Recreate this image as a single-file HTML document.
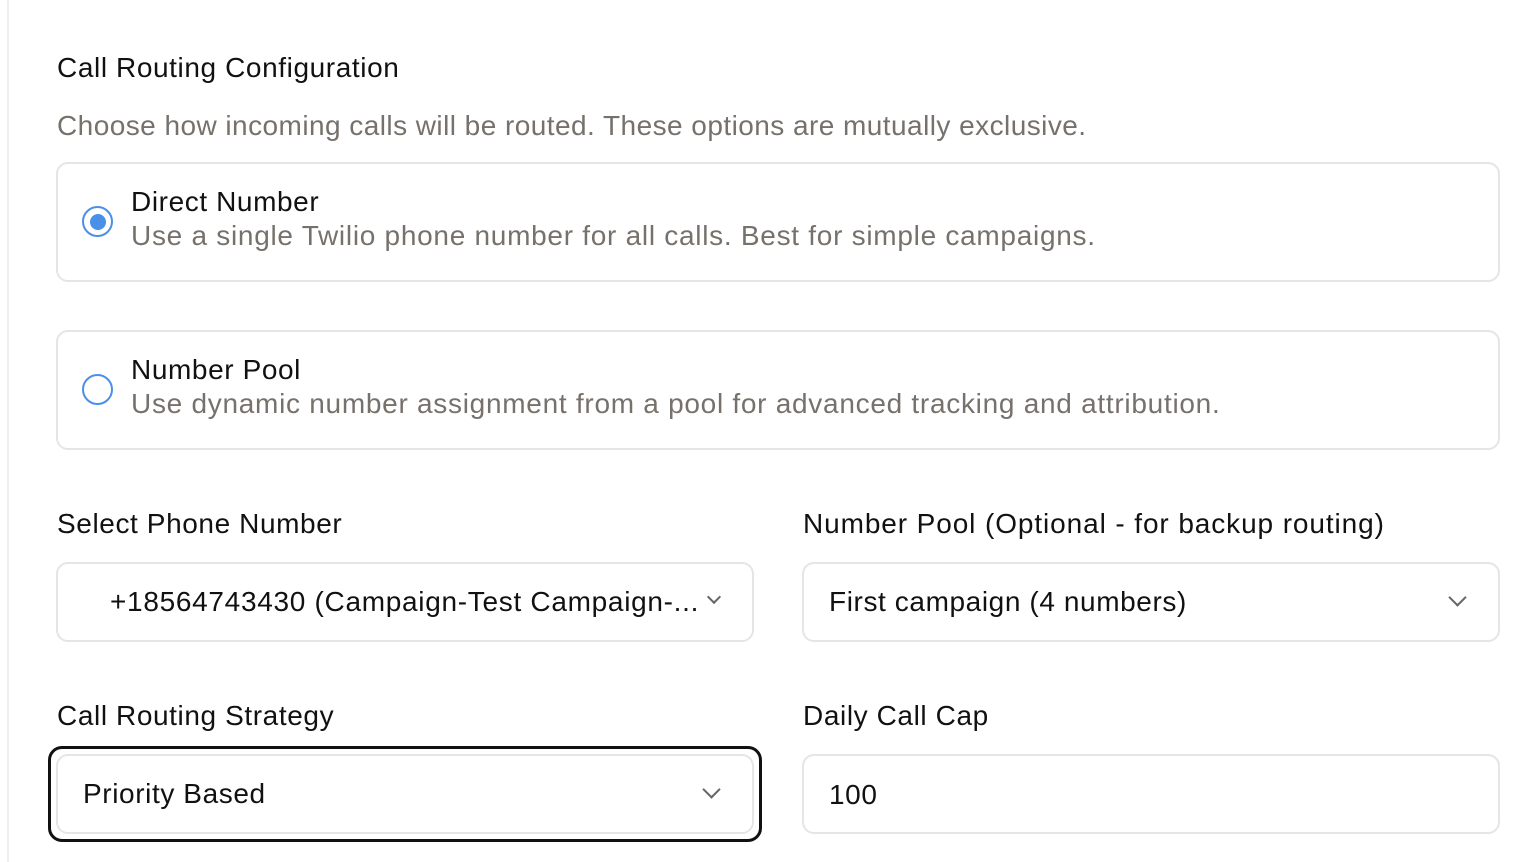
<html><head><style>
body{margin:0;width:1528px;height:862px;background:#fff;position:relative;overflow:hidden;font-family:"Liberation Sans",sans-serif;color:#111;}
.a{position:absolute;white-space:nowrap}
.box{position:absolute;border:2px solid #e5e5e5;border-radius:12px;box-sizing:border-box;background:#fff}
.t{font-size:28px;color:#111;letter-spacing:0.6px}
.g{font-size:28px;color:#77716c;letter-spacing:0.72px}
.chev{position:absolute;width:11px;height:11px;border-right:2px solid #666;border-bottom:2px solid #666;transform:rotate(45deg)}
</style></head><body>
<div class="a" style="left:7px;top:0;width:2px;height:862px;background:#eee"></div>
<div class="a t" style="left:57px;top:52px">Call Routing Configuration</div>
<div class="a g" style="left:57px;top:110px;letter-spacing:0.45px">Choose how incoming calls will be routed. These options are mutually exclusive.</div>
<div class="box" style="left:56px;top:162px;width:1444px;height:120px"></div>
<div class="a" style="left:82px;top:206px;width:31px;height:31px;border:2.5px solid #4a90e8;border-radius:50%;box-sizing:border-box"></div>
<div class="a" style="left:89.5px;top:213.5px;width:16px;height:16px;background:#4a90e8;border-radius:50%"></div>
<div class="a t" style="left:131px;top:186px">Direct Number</div>
<div class="a g" style="left:131px;top:220px">Use a single Twilio phone number for all calls. Best for simple campaigns.</div>
<div class="box" style="left:56px;top:330px;width:1444px;height:120px"></div>
<div class="a" style="left:82px;top:374px;width:31px;height:31px;border:2px solid #4a90e8;border-radius:50%;box-sizing:border-box"></div>
<div class="a t" style="left:131px;top:354px">Number Pool</div>
<div class="a g" style="left:131px;top:388px">Use dynamic number assignment from a pool for advanced tracking and attribution.</div>
<div class="a t" style="left:57px;top:508px">Select Phone Number</div>
<div class="a t" style="left:803px;top:508px;letter-spacing:0.9px">Number Pool (Optional - for backup routing)</div>
<div class="box" style="left:56px;top:562px;width:698px;height:80px"></div>
<div class="a t" style="left:110px;top:586px;letter-spacing:0.7px">+18564743430 (Campaign-Test Campaign-...</div>
<div class="chev" style="left:709px;top:592px;width:8px;height:8px"></div>
<div class="box" style="left:802px;top:562px;width:698px;height:80px"></div>
<div class="a t" style="left:829px;top:586px">First campaign (4 numbers)</div>
<div class="chev" style="left:1451px;top:591px"></div>
<div class="a t" style="left:57px;top:700px">Call Routing Strategy</div>
<div class="a t" style="left:803px;top:700px">Daily Call Cap</div>
<div class="a" style="left:48px;top:746px;width:714px;height:96px;border:3px solid #111;border-radius:14px;box-sizing:border-box"></div>
<div class="box" style="left:56px;top:754px;width:698px;height:80px"></div>
<div class="a t" style="left:83px;top:778px">Priority Based</div>
<div class="chev" style="left:705px;top:783px"></div>
<div class="box" style="left:802px;top:754px;width:698px;height:80px"></div>
<div class="a t" style="left:829px;top:779px">100</div>
</body></html>
